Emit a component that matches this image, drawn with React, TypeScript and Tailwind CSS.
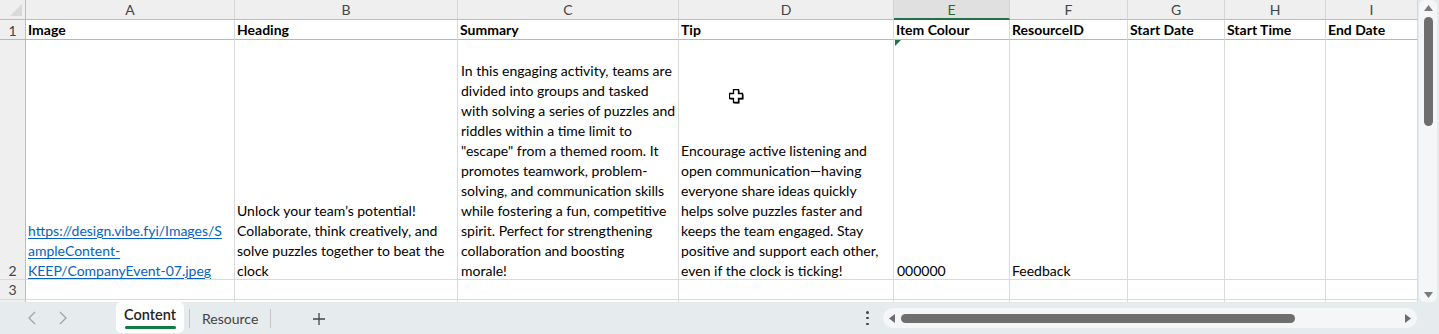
import React from "react";

const FONT = "[font-family:Lato,'Noto_Sans',sans-serif]";

const headers = [
  { l: "A", w: 209 },
  { l: "B", w: 223 },
  { l: "C", w: 221 },
  { l: "D", w: 215 },
  { l: "E", w: 116 },
  { l: "F", w: 118 },
  { l: "G", w: 97 },
  { l: "H", w: 101 },
  { l: "I", w: 92 },
];

const row1 = ["Image", "Heading", "Summary", "Tip", "Item Colour", "ResourceID", "Start Date", "Start Time", "End Date"];

const colA = ["https://design.vibe.fyi/Images/S", "ampleContent-", "KEEP/CompanyEvent-07.jpeg"];
const colB = ["Unlock your team\u2019s potential!", "Collaborate, think creatively, and", "solve puzzles together to beat the", "clock"];
const colC = [
  "In this engaging activity, teams are",
  "divided into groups and tasked",
  "with solving a series of puzzles and",
  "riddles within a time limit to",
  "\"escape\" from a themed room. It",
  "promotes teamwork, problem-",
  "solving, and communication skills",
  "while fostering a fun, competitive",
  "spirit. Perfect for strengthening",
  "collaboration and boosting",
  "morale!",
];
const colD = [
  "Encourage active listening and",
  "open communication\u2014having",
  "everyone share ideas quickly",
  "helps solve puzzles faster and",
  "keeps the team engaged. Stay",
  "positive and support each other,",
  "even if the clock is ticking!",
];

function Lines({ lines, link }: { lines: string[]; link?: boolean }) {
  return (
    <div className="flex h-full translate-y-[2px] flex-col justify-end pl-[2px]">
      {lines.map((t, i) => (
        <div
          key={i}
          className={
            "whitespace-nowrap leading-[20px] " +
            (link ? "text-[#0563c1] underline underline-offset-[2px]" : "text-black")
          }
        >
          {t}
        </div>
      ))}
    </div>
  );
}

function Cursor() {
  return (
    <svg width="16" height="16" viewBox="0 0 16 16" className="absolute left-[50px] top-[49px]">
      <path d="M5.5 1.5H10.5V5.5H14.5V10.5H10.5V14.5H5.5V10.5H1.5V5.5H5.5Z" fill="black" />
      <path d="M4.5 0.5H9.5V4.5H13.5V9.5H9.5V13.5H4.5V9.5H0.5V4.5H4.5Z" fill="white" stroke="black" strokeWidth="1.3" />
    </svg>
  );
}

export default function App() {
  const gridCols =
    "grid-cols-[26px_209px_223px_221px_215px_116px_118px_97px_101px_92px]";
  const cell = "border-r border-b border-[#dadada] bg-white overflow-visible";
  return (
    <div className={`${FONT} flex h-[334px] w-[1439px] flex-col overflow-hidden bg-[#e6ebee] text-[14px]`}>
      <div className="flex h-[302px]">
        <div className={`grid w-[1418px] ${gridCols} grid-rows-[20px_20px_240px_20px_2px] bg-white`}>
          {/* header row */}
          <div className="relative border-r border-b border-r-[#bdbdbd] border-b-[#bdbdbd] bg-[#efefef]">
            <svg width="26" height="20" className="absolute left-0 top-0">
              <polygon points="22,4 22,16 10,16" fill="#d9d9d9" />
            </svg>
          </div>
          {headers.map((h) =>
            h.l === "E" ? (
              <div
                key={h.l}
                className="flex items-center justify-center border-r border-b-2 border-r-[#d4d4d4] border-b-[#217346] bg-[#e0e0e0] pt-[1px] leading-[18px] text-[#1e6b3c]"
              >
                {h.l}
              </div>
            ) : (
              <div
                key={h.l}
                className="flex items-center justify-center border-r border-b border-r-[#d4d4d4] border-b-[#bdbdbd] bg-[#efefef] leading-[18px] text-[#444]"
              >
                {h.l}
              </div>
            )
          )}

          {/* row 1 */}
          <div className="flex items-center justify-center border-r border-b border-r-[#bdbdbd] border-b-[#b8b8b8] bg-[#efefef] pt-[1px] leading-[19px] text-[#444]">
            1
          </div>
          {row1.map((t) => (
            <div key={t} className="flex items-end border-r border-b border-r-[#dadada] border-b-[#b8b8b8] bg-white pl-[2px]">
              <span className="whitespace-nowrap font-bold leading-[19px] text-black">{t}</span>
            </div>
          ))}

          {/* row 2 */}
          <div className="flex items-end justify-center border-r border-b border-r-[#bdbdbd] border-b-[#dadada] bg-[#efefef] text-[#444]">
            <span className="translate-y-[2px] leading-[20px]">2</span>
          </div>
          <div className={cell}>
            <Lines lines={colA} link />
          </div>
          <div className={cell}>
            <Lines lines={colB} />
          </div>
          <div className={`${cell} pl-[1px]`}>
            <Lines lines={colC} />
          </div>
          <div className={`relative ${cell}`}>
            <Lines lines={colD} />
            <Cursor />
          </div>
          <div className={`relative ${cell} pl-[1px]`}>
            <svg width="6" height="6" className="absolute left-[1px] top-0">
              <polygon points="0,0 6,0 0,6" fill="#217346" />
            </svg>
            <Lines lines={["000000"]} />
          </div>
          <div className={cell}>
            <Lines lines={["Feedback"]} />
          </div>
          <div className={cell} />
          <div className={cell} />
          <div className={cell} />

          {/* row 3 */}
          <div className="flex items-end justify-center border-r border-b border-r-[#bdbdbd] border-b-[#dadada] bg-[#efefef] text-[#444]">
            <span className="translate-y-[1px] leading-[20px]">3</span>
          </div>
          {headers.map((h) => (
            <div key={"r3" + h.l} className={cell} />
          ))}

          {/* partial row 4 */}
          <div className="border-r border-r-[#bdbdbd] bg-[#efefef]" />
          {headers.map((h) => (
            <div key={"r4" + h.l} className="border-r border-[#dadada] bg-white" />
          ))}
        </div>

        {/* vertical scrollbar */}
        <div className="w-[21px] pl-[1px]">
          <div className="flex h-[302px] w-[18px] flex-col items-center rounded-[6px] bg-[#f5f6f7]">
            <svg width="9" height="6" className="mt-[5px]">
              <polygon points="4.5,0 9,6 0,6" fill="#7a7a7a" />
            </svg>
            <div className="mt-[6px] h-[109px] w-[9px] rounded-full bg-[#6e6e6e]" />
            <div className="flex-1" />
            <svg width="9" height="6" className="mb-[4px]">
              <polygon points="0,0 9,0 4.5,6" fill="#7a7a7a" />
            </svg>
          </div>
        </div>
      </div>

      {/* bottom bar */}
      <div className="flex h-[32px] items-center">
        <div className="flex w-[116px] items-center">
          <svg width="8" height="14" viewBox="0 0 8 14" className="ml-[28px]">
            <polyline points="7,1 1,7 7,13" fill="none" stroke="#a3a3a3" strokeWidth="1.3" />
          </svg>
          <svg width="8" height="14" viewBox="0 0 8 14" className="ml-[23px]">
            <polyline points="1,1 7,7 1,13" fill="none" stroke="#a3a3a3" strokeWidth="1.3" />
          </svg>
        </div>
        <div className="flex h-[31px] w-[68px] flex-col items-center self-start rounded-[5px] bg-white">
          <span className="mt-[3px] text-[14.5px] font-semibold leading-[20px] text-[#242424]">Content</span>
          <div className="mt-[1px] h-[3px] w-[51px] rounded-full bg-[#107c41]" />
        </div>
        <div className="ml-[5px] h-[19px] w-px bg-[#c6c6c6]" />
        <span className="ml-[12px] pt-[2px] leading-[20px] text-[#424242]">Resource</span>
        <div className="ml-[12px] h-[19px] w-px bg-[#c6c6c6]" />
        <svg width="14" height="14" viewBox="0 0 14 14" className="ml-[41px] mt-[1px]">
          <path d="M7 1V13M1 7H13" stroke="#444" strokeWidth="1.3" />
        </svg>
        <div className="flex-1" />
        <div className="flex h-[14px] w-[3px] flex-col justify-between">
          <div className="h-[2.5px] w-[2.5px] rounded-full bg-[#444]" />
          <div className="h-[2.5px] w-[2.5px] rounded-full bg-[#444]" />
          <div className="h-[2.5px] w-[2.5px] rounded-full bg-[#444]" />
        </div>
        <div className="ml-[14px] mr-[22px] flex h-[20px] w-[534px] items-center rounded-full bg-[#f5f6f7] px-[6px]">
          <svg width="6" height="9">
            <polygon points="6,0 6,9 0,4.5" fill="#6e6e6e" />
          </svg>
          <div className="ml-[6px] h-[9px] w-[394px] rounded-full bg-[#6e6e6e]" />
          <div className="flex-1" />
          <svg width="6" height="9">
            <polygon points="0,0 6,4.5 0,9" fill="#6e6e6e" />
          </svg>
        </div>
      </div>
    </div>
  );
}
